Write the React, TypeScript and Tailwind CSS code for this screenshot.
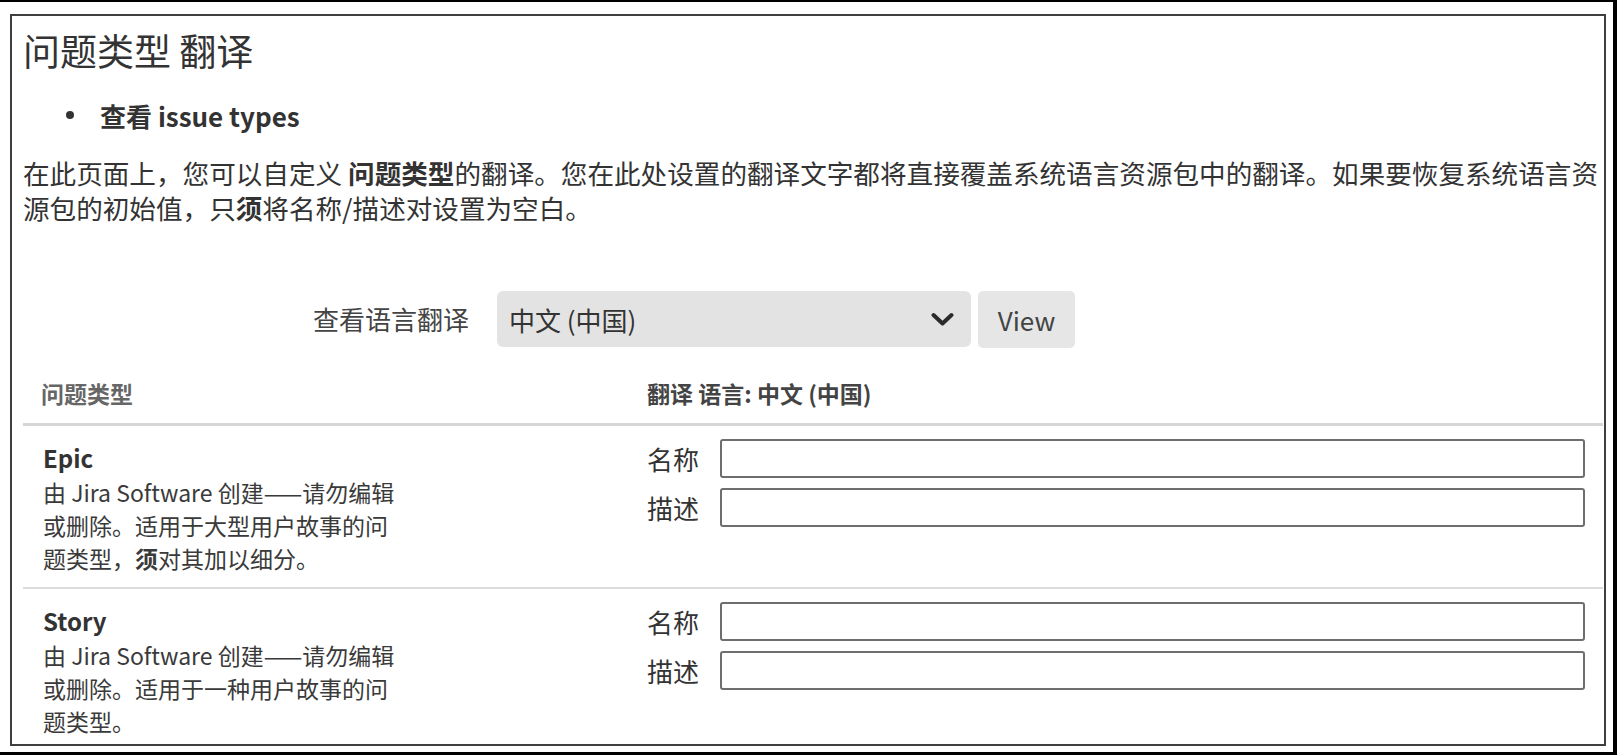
import React from "react";

function Chevron() {
  return (
    <svg width="23" height="15" viewBox="0 0 23 15" fill="none">
      <polyline points="2.5,3 11.5,11.5 20.5,3" stroke="#2b2b2b" strokeWidth="4" strokeLinecap="round" strokeLinejoin="round" />
    </svg>
  );
}

function Field({ label }: { label: string }) {
  return (
    <div className="flex items-center">
      <div className="w-[54px] text-[26px] leading-[32px] text-[#333]">{label}</div>
      <div className="ml-[19px] flex-1 h-[39px] border-2 border-[#6e6e6e] rounded-[3px] bg-white" />
    </div>
  );
}

function Row({ title, lines, last }: { title: string; lines: React.ReactNode[]; last?: boolean }) {
  return (
    <div className={"grid grid-cols-[624px_1fr] pt-[13px] pb-[12px] " + (last ? "" : "border-b-2 border-[#dcdcdc]")}>
      <div className="pl-[20px]">
        <div className="mt-[5px] text-[24px] leading-[28px] font-bold text-[#333]">{title}</div>
        <div className="mt-[4px] text-[23px] leading-[33px] text-[#3a3a3a]">
          {lines.map((l, i) => (
            <div key={i} className="whitespace-nowrap">{l}</div>
          ))}
        </div>
      </div>
      <div className="flex flex-col gap-[10px] pr-[18px]">
        <Field label="名称" />
        <Field label="描述" />
      </div>
    </div>
  );
}

export default function App() {
  return (
    <div className="w-[1617px] h-[755px] bg-white border-t-2 border-r-4 border-b-[3px] border-black pl-[10px] pt-[12px] pr-[7px] pb-[6px] font-['Noto_Sans_CJK_SC',sans-serif] text-[#333]">
      <div className="h-full border-2 border-[#3f3f3f] overflow-hidden pl-[11px] pr-[1px]">
        <h1 className="mt-[10px] text-[37px] leading-[48px] font-normal text-[#333]">问题类型 翻译</h1>

        <div className="mt-[23px] flex items-center h-[36px]">
          <span className="ml-[43px] w-[8px] h-[8px] rounded-full bg-[#333]" />
          <span className="ml-[26px] text-[26px] font-bold text-[#333]">查看 issue types</span>
        </div>

        <p className="mt-[22px] text-[26.6px] leading-[35px] text-[#333] whitespace-nowrap">
          在此页面上，您可以自定义 <b className="font-bold">问题类型</b>的翻译。您在此处设置的翻译文字都将直接覆盖系统语言资源包中的翻译。如果要恢复系统语言资
          <br />
          源包的初始值，只<b className="font-bold">须</b>将名称/描述对设置为空白。
        </p>

        <div className="mt-[65px] flex items-center h-[58px]">
          <div className="w-[446px] text-right text-[26px] leading-[32px] text-[#444]">查看语言翻译</div>
          <div className="ml-[28px] w-[474px] h-[56px] rounded-[6px] bg-[#e3e3e3] flex items-center pl-[12px] pr-[17px]">
            <span className="flex-1 text-[26px] text-[#333]">中文 (中国)</span>
            <Chevron />
          </div>
          <div className="ml-[7px] w-[97px] h-[57px] rounded-[5px] bg-[#e6e6e6] flex items-center justify-center text-[26px] text-[#444]">
            View
          </div>
        </div>

        <div className="mt-[30px] grid grid-cols-[624px_1fr] pb-[15px] border-b-[3px] border-[#d6d6d6]">
          <div className="pl-[18px] text-[23px] leading-[30px] font-semibold text-[#666]">问题类型</div>
          <div className="text-[23px] leading-[30px] font-bold text-[#444]">翻译 语言: 中文 (中国)</div>
        </div>

        <Row
          title="Epic"
          lines={[
            "由 Jira Software 创建——请勿编辑",
            "或删除。适用于大型用户故事的问",
            <>题类型，<b className="font-bold">须</b>对其加以细分。</>,
          ]}
        />
        <Row
          title="Story"
          last
          lines={[
            "由 Jira Software 创建——请勿编辑",
            "或删除。适用于一种用户故事的问",
            "题类型。",
          ]}
        />
      </div>
    </div>
  );
}
